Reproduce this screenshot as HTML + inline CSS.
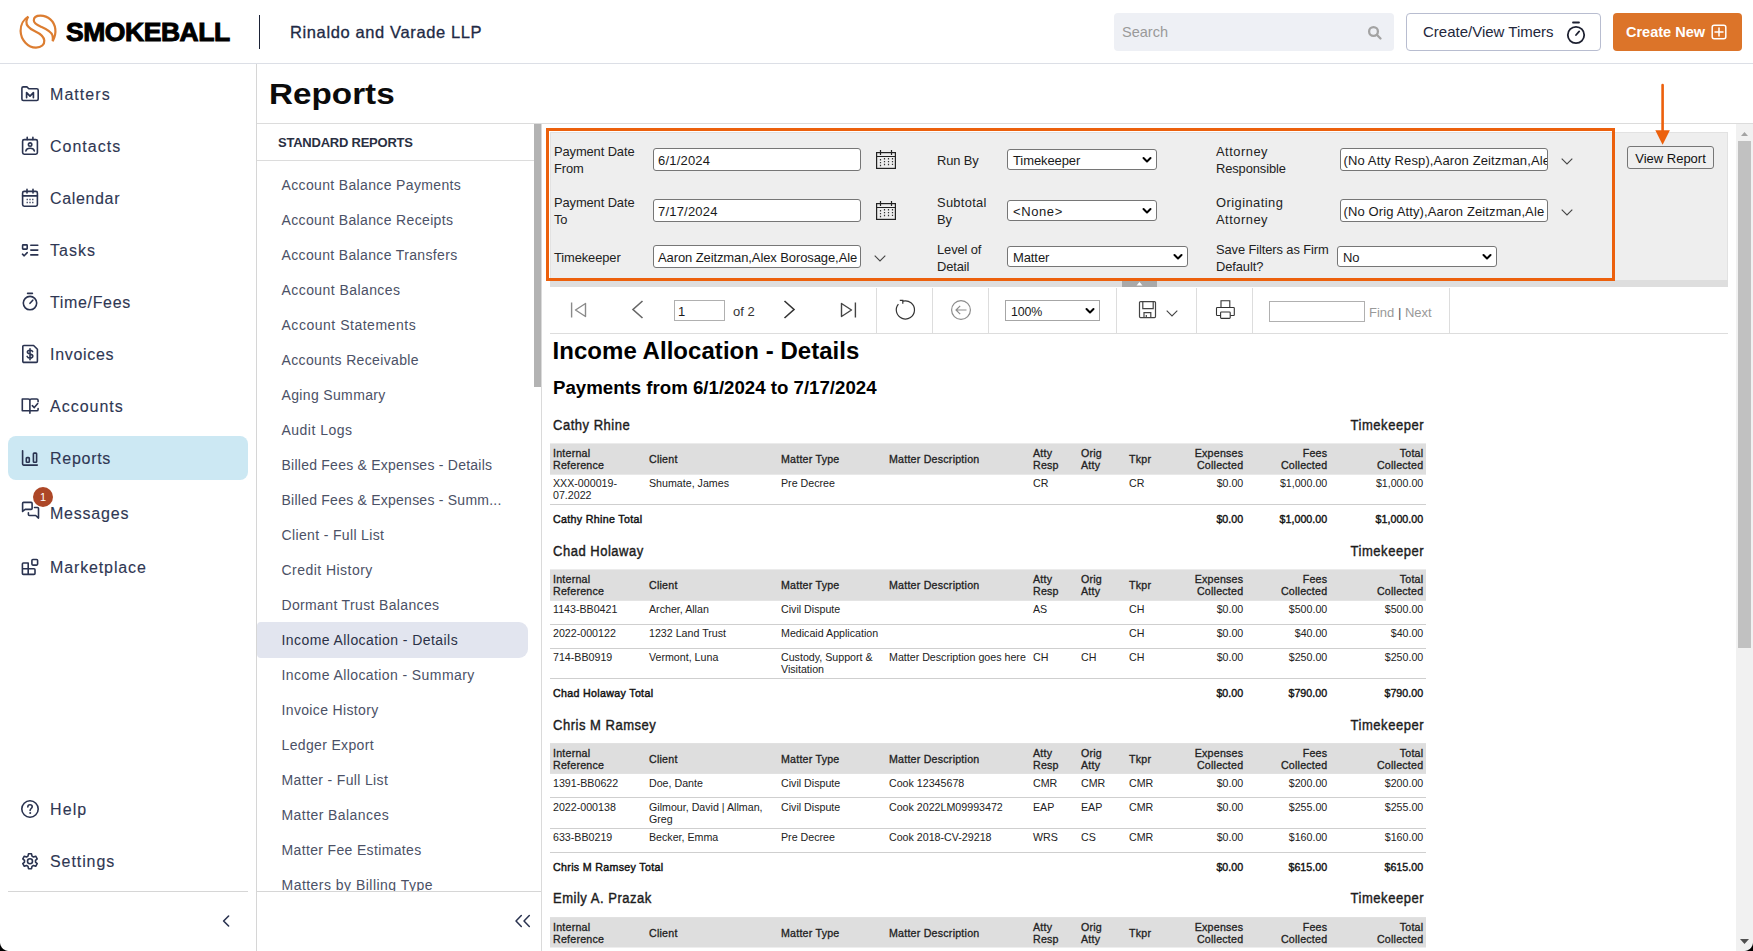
<!DOCTYPE html>
<html lang="en">
<head>
<meta charset="utf-8">
<title>Reports - Smokeball</title>
<style>
*{box-sizing:border-box;margin:0;padding:0}
html,body{width:1753px;height:951px;overflow:hidden;background:#fff}
body{font-family:"Liberation Sans",sans-serif;color:#1f2937;position:relative}
.abs{position:absolute}
svg{display:block}
/* header */
#hdr{z-index:5;position:absolute;left:0;top:0;width:1753px;height:64px;border-bottom:1px solid #dcdfe6;background:#fff}
#brand{position:absolute;left:66px;top:16px;font-weight:700;font-size:26.5px;line-height:32px;color:#000;letter-spacing:-0.45px;-webkit-text-stroke:1px #000;white-space:nowrap}
#hdiv{position:absolute;left:259px;top:15px;width:1.3px;height:34px;background:#1b2236}
#firm{position:absolute;left:290px;top:21px;font-size:16.5px;line-height:22px;color:#222a45;white-space:nowrap;-webkit-text-stroke:0.3px #222a45;letter-spacing:0.62px}
#search{position:absolute;left:1114px;top:13px;width:280px;height:38px;background:#eef0f5;border-radius:4px}
#search span{position:absolute;left:8px;top:10px;font-size:14.5px;line-height:18px;color:#9a9a9a}
#timers{position:absolute;left:1406px;top:13px;width:195px;height:38px;border:1px solid #b8bdd0;border-radius:4px;background:#fff}
#timers span{position:absolute;left:16px;top:9px;font-size:15px;line-height:18px;color:#23273b;white-space:nowrap}
#cnew{position:absolute;left:1613px;top:13px;width:129px;height:38px;border-radius:4px;background:#dc7429}
#cnew span{position:absolute;left:13px;top:10px;font-size:14.5px;line-height:18px;color:#fff;font-weight:700;white-space:nowrap}
/* sidebar */
#side{position:absolute;left:0;top:0;width:257px;height:951px;border-right:1px solid #d6d6d6;background:#fff}
.nav{position:absolute;left:50px;margin-top:1px;font-size:16px;line-height:22px;color:#2f3753;white-space:nowrap;-webkit-text-stroke:0.12px #2f3753;letter-spacing:0.65px}
.nico{position:absolute;left:20px;width:20px;height:20px}
.nico svg{width:20px;height:20px;fill:none;stroke:#2a3350;stroke-width:1.6;stroke-linecap:round;stroke-linejoin:round}
#active{position:absolute;left:8px;top:436px;width:240px;height:44px;border-radius:8px;background:#cce8f3}
#badge{position:absolute;left:33px;top:487px;width:20px;height:20px;border-radius:10px;background:#ad4727;color:#fff;font-size:11px;line-height:20px;text-align:center}
#sdiv{position:absolute;left:8px;top:891px;width:240px;height:1px;background:#d6d6d6}
#corner{position:absolute;left:0;top:942px;width:9px;height:9px;background:radial-gradient(circle at 100% 0,transparent 0,transparent 8.5px,#000 9.5px)}
/* main */
#title{position:absolute;left:269px;top:74px;font-size:28.6px;line-height:40px;font-weight:700;color:#0b0b0b;transform:scaleX(1.163);transform-origin:0 0;white-space:nowrap}
#tline{position:absolute;left:257px;top:123px;width:1496px;height:1px;background:#dcdcdc}
#lp{position:absolute;left:257px;top:124px;width:285px;height:827px;border-right:1px solid #dadada;overflow:hidden}
#lphead{position:absolute;left:21px;top:9.7px;font-size:13px;line-height:18px;font-weight:700;color:#2a2f42;letter-spacing:-0.23px;white-space:nowrap}
#lpline{position:absolute;left:0;top:36px;width:277px;height:1px;background:#dcdcdc}
#lplist{position:absolute;left:0;top:37px;width:277px;height:730px;overflow:hidden}
#lplist .li{position:absolute;left:24.5px;margin-top:-37px;font-size:14px;line-height:20px;color:#4b5166;white-space:nowrap;letter-spacing:0.35px}
#lplist .li.sel{color:#2b3146}
#lpsel{position:absolute;left:0;top:498px;width:271px;height:36px;border-radius:4px 9px 9px 4px;background:#e2e5ef}
#lpsb{position:absolute;left:277px;top:0;width:7px;height:263px;background:#b3b3b3}
#lpfoot{position:absolute;left:0;top:767px;width:284px;height:60px;border-top:1px solid #d6d6d6;background:#fff}
#rv{position:absolute;left:0;top:0;width:1753px;height:951px;font-family:"Liberation Sans",sans-serif}
#fp{position:absolute;left:550px;top:132px;width:1178px;height:148.5px;background:#eeeeee;border:1px solid #e2e2e2}
#fpband{position:absolute;left:550px;top:280px;width:1178px;height:7px;background:#dedede}
#fphandle{position:absolute;left:1122px;top:280px;width:35px;height:7px;background:#a9a9a9}
#obox{position:absolute;left:546.2px;top:127.8px;width:1068.4px;height:153px;border:3.6px solid #ec600c}
.lab{position:absolute;font-size:12.9px;line-height:17px;color:#222;white-space:nowrap;letter-spacing:-0.1px}
.inp,.sel2,.tinp{position:absolute;background:#fff;border:1px solid #767676;border-radius:3px;overflow:hidden}
.inp span,.sel2 span,.tinp span{position:absolute;left:4px;top:4px;font-size:13px;line-height:16px;color:#1a1a1a;white-space:nowrap;letter-spacing:-0.1px}
.inp span i{font-style:normal;letter-spacing:0.2px}
.inp span b{font-weight:400;letter-spacing:0.13px;margin-left:-1.5px}
.lab i{font-style:normal}
.sel2 span{top:3px;left:5px}
.sel2.sq{border-radius:0;border-color:#a6a6a6}
.sel2.sq span{left:5px;top:2.5px;font-size:12.4px}
.tinp{border-color:#b0b0b0;border-radius:0}
.tinp span{left:3px;top:3px}
#vbtn{position:absolute;left:1627px;top:146px;width:87px;height:23px;border:1px solid #767676;border-radius:3px;background:#efefef;font-size:13px;line-height:23px;text-align:center;color:#111}
#tbline{position:absolute;left:550px;top:333px;width:1178px;height:1px;background:#dddddd}
.tsep{position:absolute;top:288px;width:1px;height:45px;background:#dddddd}
.ttxt{position:absolute;font-size:13px;line-height:16px;white-space:nowrap}
#vsb{position:absolute;left:1736px;top:124px;width:17px;height:827px;background:#f1f1f1}
#vthumb{position:absolute;left:2px;top:17px;width:13px;height:507px;background:#c1c1c1}
#corner2{position:absolute;left:1744px;top:942px;width:9px;height:9px;background:radial-gradient(circle at 0 0,transparent 0,transparent 8.5px,#000 9.5px)}
#r1{position:absolute;left:552.5px;top:337px;font-size:24px;line-height:28px;font-weight:700;color:#000;white-space:nowrap;letter-spacing:0.04px}
#r2{position:absolute;left:553px;top:376px;font-size:18.67px;line-height:24px;font-weight:700;color:#000;white-space:nowrap}
.hbg{position:absolute;left:550px}
.th{position:absolute;font-size:10.67px;line-height:12px;color:#222;white-space:nowrap;-webkit-text-stroke:0.3px #222;letter-spacing:0.22px}
.td{position:absolute;font-size:10.67px;line-height:12px;color:#222;white-space:nowrap}
.tt{position:absolute;font-size:10.67px;line-height:12px;color:#111;white-space:nowrap;-webkit-text-stroke:0.42px #111;letter-spacing:0.32px}
.r{width:100px;text-align:right}
.tt.a{letter-spacing:0.05px;-webkit-text-stroke:0.38px #111}
.gh{position:absolute;font-size:14px;line-height:18px;color:#1c1c1c;white-space:nowrap;-webkit-text-stroke:0.4px #1c1c1c;letter-spacing:0.55px;transform:scaleX(.93);transform-origin:0 0}
.gh.r{width:200px;transform-origin:100% 0;margin-left:0.6px}
.rl{position:absolute;left:550px;width:876px;height:1px;background:#cfcfcf}
</style>
</head>
<body>
<div id="hdr">
  <svg class="abs" style="left:14px;top:8px" width="50" height="48" viewBox="14 8 50 48" fill="none" stroke="#dc7d31" stroke-width="2.2" stroke-linejoin="miter" stroke-miterlimit="4">
    <path d="M28.3 16.6C24 19 20.5 24.5 20.6 31C20.8 40 28 47.5 36 47.6C41.5 47.6 44.6 44.5 44.3 40.5C44 36 40 33.5 35 31.2C30 29 26 26 26.4 21.5C26.6 19.5 27.3 18 28.3 16.6Z"/>
    <path d="M52.7 41.2C55 37 55.8 33 55.3 29C54.3 21 48 15.8 40.5 15.7C36.5 15.7 33.8 17.5 33.8 20.5C33.8 23.5 37 25 41 26.8C46 29 51 31 52.5 35.5C53 37.5 53 39.5 52.7 41.2Z"/>
  </svg>
  <div id="brand">SMOKEBALL</div>
  <div id="hdiv"></div>
  <div id="firm">Rinaldo and Varade LLP</div>
  <div id="search"><span>Search</span>
    <svg class="abs" style="left:253px;top:12px" width="16" height="16" viewBox="0 0 16 16" fill="none" stroke="#a3a3a3" stroke-width="2.3"><circle cx="6.5" cy="6.5" r="4.4"/><path d="M9.8 9.8L13.5 13.5" stroke-linecap="round"/></svg>
  </div>
  <div id="timers"><span>Create/View Timers</span>
    <svg class="abs" style="left:157px;top:6px" width="24" height="26" viewBox="0 0 24 26" fill="none" stroke="#1d2030" stroke-width="1.8" stroke-linecap="round"><circle cx="12" cy="15" r="8.2"/><path d="M9 2.5h6M12 15l3.2-3.6"/></svg>
  </div>
  <div id="cnew"><span>Create New</span>
    <svg class="abs" style="left:97px;top:10px" width="18" height="18" viewBox="0 0 18 18" fill="none" stroke="#fff" stroke-width="1.5" stroke-linecap="round"><rect x="2.2" y="2.2" width="13.6" height="13.6" rx="2"/><path d="M9 5v8M5 9h8"/></svg>
  </div>
</div>

<div id="side">
  <div id="active"></div>
  <!--NAV-->
  <div class="nico" style="top:84px"><svg viewBox="0 0 20 20"><path d="M1.9 4.3a1.4 1.4 0 0 1 1.4-1.4h3.6l1.9 1.9h8a1.4 1.4 0 0 1 1.4 1.4v8.9a1.4 1.4 0 0 1-1.4 1.4H3.3a1.4 1.4 0 0 1-1.4-1.4z"/><path d="M6.6 13.6V8.6l3.4 3.6 3.4-3.6v5" stroke-width="1.7"/></svg></div><div class="nav" style="top:83px;letter-spacing:1.05px">Matters</div>
  <div class="nico" style="top:136px"><svg viewBox="0 0 20 20"><rect x="2.6" y="3.6" width="14.8" height="14.6" rx="1.6"/><path d="M7.2 1.4v2.2M12.9 1.4v2.2"/><circle cx="10.1" cy="8.6" r="1.7"/><path d="M5.9 14.9c.8-3.5 7.6-3.5 8.4 0"/></svg></div><div class="nav" style="top:135px;letter-spacing:1.0px">Contacts</div>
  <div class="nico" style="top:188px"><svg viewBox="0 0 20 20"><rect x="2.6" y="3.4" width="14.8" height="14.8" rx="1.6"/><path d="M7 1.4v3.6M13 1.4v3.6M2.6 7.9h14.8"/><path d="M6.6 11.4h1.2M9.4 11.4h1.2M12.2 11.4h1.2M6.6 14.4h1.2M9.4 14.4h1.2M12.2 14.4h1.2" stroke-width="1.5" stroke-linecap="butt"/></svg></div><div class="nav" style="top:187px;letter-spacing:0.65px">Calendar</div>
  <div class="nico" style="top:240px"><svg viewBox="0 0 20 20"><rect x="2.6" y="4.9" width="4.6" height="4.2" rx=".6"/><path d="M2.5 14.2l1.7 1.6 3-3.2M10.8 5.2h7M10.8 10.1h7M10.8 14.9h7"/></svg></div><div class="nav" style="top:239px;letter-spacing:1.05px">Tasks</div>
  <div class="nico" style="top:292px"><svg viewBox="0 0 20 20"><circle cx="10" cy="11.1" r="6.7"/><path d="M7.6 1.4h4.8M10 11.3l2.8-3.1"/></svg></div><div class="nav" style="top:291px;letter-spacing:0.65px">Time/Fees</div>
  <div class="nico" style="top:344px"><svg viewBox="0 0 20 20"><path d="M3.9 1.5h9.7l3.8 3.8v12a1.1 1.1 0 0 1-1.1 1.1H3.9a1.1 1.1 0 0 1-1.1-1.1V2.6a1.1 1.1 0 0 1 1.1-1.1z"/><path d="M12.6 7.6c-.3-.9-1.3-1.4-2.6-1.4-1.5 0-2.6.7-2.6 1.9 0 2.8 5.4 1.2 5.4 4 0 1.2-1.2 2-2.8 2-1.5 0-2.6-.6-2.9-1.7M10 4.7v11"/></svg></div><div class="nav" style="top:343px;letter-spacing:0.7px">Invoices</div>
  <div class="nico" style="top:396px"><svg viewBox="0 0 20 20"><path d="M9.9 14.8H2.3V3h6a1.6 1.6 0 0 1 1.6 1.6zM9.9 4.6A1.6 1.6 0 0 1 11.5 3h5.2a1.4 1.4 0 0 1 1.4 1.4v1.4M9.9 14.8v2.5M9.9 14.8h6.8a1.4 1.4 0 0 0 1.4-1.4v-.8"/><path d="M12.3 9.7l2 1.9 3.4-4"/></svg></div><div class="nav" style="top:395px;letter-spacing:1.0px">Accounts</div>
  <div class="nico" style="top:448px"><svg viewBox="0 0 20 20"><path d="M2.6 2.8v13.3a1 1 0 0 0 1 1h13.7"/><rect x="6.3" y="9.6" width="3" height="4.6" rx=".7"/><rect x="13.4" y="5.1" width="3.2" height="9.1" rx=".7"/></svg></div><div class="nav" style="top:447px;letter-spacing:0.72px">Reports</div>
  <div class="nico" style="top:500px"><svg viewBox="0 0 20 20"><path d="M2.6 11.4V3.4a1 1 0 0 1 1-1h7.5a1 1 0 0 1 1 1v5a1 1 0 0 1-1 1H5.2z"/><path d="M14.5 7.5h3a1 1 0 0 1 1 1v9.6l-2.8-2.6H9.4a1 1 0 0 1-1-1v-1.8"/></svg></div><div class="nav" style="top:502px;letter-spacing:0.78px">Messages</div>
  <div class="nico" style="top:557px"><svg viewBox="0 0 20 20"><path d="M2.4 7a1 1 0 0 1 1-1h4.8v11.4H3.4a1 1 0 0 1-1-1zM2.4 11.8h11.6a1 1 0 0 1 1 1v3.6a1 1 0 0 1-1 1H8.2"/><rect x="11.9" y="2.5" width="5.7" height="5.6" rx="1"/></svg></div><div class="nav" style="top:556px;letter-spacing:0.87px">Marketplace</div>
  <div class="nico" style="top:799px"><svg viewBox="0 0 20 20"><circle cx="10" cy="10" r="8.2"/><path d="M7.8 7.9c0-1.3 1-2.1 2.2-2.1 1.3 0 2.2.9 2.2 2 0 1.7-2.1 1.7-2.1 3.6"/><circle cx="10.1" cy="14" r=".5" fill="#2a3350" stroke-width="1"/></svg></div><div class="nav" style="top:798px;letter-spacing:1.1px">Help</div>
  <div class="nico" style="top:851.7px"><svg viewBox="0 0 20 20"><path d="M8.5 1.8h3l.5 2.3 1.5.9 2.2-.8 1.5 2.6-1.7 1.6v1.7l1.7 1.6-1.5 2.6-2.2-.8-1.5.9-.5 2.3h-3l-.5-2.3-1.5-.9-2.2.8-1.5-2.6 1.7-1.6V8.4L2.8 6.8l1.5-2.6 2.2.8 1.5-.9z"/><circle cx="10" cy="9.25" r="2.5"/></svg></div><div class="nav" style="top:850px;letter-spacing:0.92px">Settings</div>
  <div id="badge">1</div>
  <div id="sdiv"></div>
  <svg class="abs" style="left:219px;top:913px" width="14" height="16" viewBox="0 0 14 16" fill="none" stroke="#2a3350" stroke-width="1.6" stroke-linecap="round" stroke-linejoin="round"><path d="M9.6 3L4.6 8l5 5"/></svg>
  <div id="corner"></div>
  <!--/NAV-->
</div>

<!--MAIN-->
<div id="title">Reports</div>
<div id="tline"></div>
<div id="lp">
  <div id="lphead">STANDARD REPORTS</div>
  <div id="lpline"></div>
  <div id="lpsel"></div>
  <div id="lplist">
    <div class="li" style="top:51px">Account Balance Payments</div>
    <div class="li" style="top:86px">Account Balance Receipts</div>
    <div class="li" style="top:121px">Account Balance Transfers</div>
    <div class="li" style="top:156px;letter-spacing:0.43px">Account Balances</div>
    <div class="li" style="top:191px;letter-spacing:0.52px">Account Statements</div>
    <div class="li" style="top:226px">Accounts Receivable</div>
    <div class="li" style="top:261px">Aging Summary</div>
    <div class="li" style="top:296px;letter-spacing:0.48px">Audit Logs</div>
    <div class="li" style="top:331px;letter-spacing:0.24px">Billed Fees &amp; Expenses - Details</div>
    <div class="li" style="top:366px;letter-spacing:0.24px">Billed Fees &amp; Expenses - Summ...</div>
    <div class="li" style="top:401px">Client - Full List</div>
    <div class="li" style="top:436px;letter-spacing:0.46px">Credit History</div>
    <div class="li" style="top:471px">Dormant Trust Balances</div>
    <div class="li sel" style="top:506px;letter-spacing:0.43px">Income Allocation - Details</div>
    <div class="li" style="top:541px;letter-spacing:0.41px">Income Allocation - Summary</div>
    <div class="li" style="top:576px">Invoice History</div>
    <div class="li" style="top:611px">Ledger Export</div>
    <div class="li" style="top:646px">Matter - Full List</div>
    <div class="li" style="top:681px;letter-spacing:0.43px">Matter Balances</div>
    <div class="li" style="top:716px">Matter Fee Estimates</div>
    <div class="li" style="top:751px;letter-spacing:0.47px">Matters by Billing Type</div>
  </div>
  <div id="lpsb"></div>
  <div id="lpfoot"><svg class="abs" style="left:257px;top:21px" width="18" height="16" viewBox="0 0 18 16" fill="none" stroke="#2a3350" stroke-width="1.5" stroke-linecap="round" stroke-linejoin="round"><path d="M7.3 2.5L2 8l5.3 5.5M15.3 2.5L10 8l5.3 5.5"/></svg></div>
</div>
<div id="rv">
  <div id="fp"></div><div id="fpband"></div><div id="fphandle"><svg width="35" height="7" viewBox="0 0 35 7"><path d="M14.5 5.5l3-3.5 3 3.5z" fill="#fff"/></svg></div>
  <div id="obox"></div>
  <div class="lab" style="left:554px;top:143.2px">Payment Date<br>From</div>
  <div class="lab" style="left:554px;top:194.1px">Payment Date<br>To</div>
  <div class="lab" style="left:554px;top:248.5px">Timekeeper</div>
  <div class="lab" style="left:937px;top:151.5px">Run By</div>
  <div class="lab" style="left:937px;top:194.1px"><i style="letter-spacing:.3px">Subtotal</i><br>By</div>
  <div class="lab" style="left:937px;top:240.9px">Level of<br>Detail</div>
  <div class="lab" style="left:1216px;top:143.3px"><i style="letter-spacing:.5px">Attorney</i><br>Responsible</div>
  <div class="lab" style="left:1216px;top:193.9px"><i style="letter-spacing:.45px">Originating</i><br><i style="letter-spacing:.5px">Attorney</i></div>
  <div class="lab" style="left:1216px;top:240.8px">Save Filters as Firm<br>Default?</div>
  <div class="inp" style="left:653px;top:148px;width:208px;height:23px"><span><i>6/1/2024</i></span></div>
  <div class="inp" style="left:653px;top:199px;width:208px;height:23px"><span><i>7/17/2024</i></span></div>
  <div class="inp" style="left:653px;top:245px;width:208px;height:23px"><span>Aaron Zeitzman,Alex Borosage,Ale</span></div>
  <div class="inp" style="left:1340px;top:148px;width:208px;height:23px"><span><b>(No Atty Resp),Aaron Zeitzman,Ale</b></span></div>
  <div class="inp" style="left:1340px;top:199px;width:208px;height:23px"><span><b>(No Orig Atty),Aaron Zeitzman,Ale</b></span></div>
  <div class="sel2" style="left:1007px;top:149px;width:150px;height:21px"><span>Timekeeper</span><svg class="abs" style="right:4px;top:5.5px" width="10" height="8" viewBox="0 0 10 8" fill="none" stroke="#000" stroke-width="2" stroke-linecap="round" stroke-linejoin="round"><path d="M1.5 2l3.5 3.5L8.5 2"/></svg></div>
  <div class="sel2" style="left:1007px;top:200px;width:150px;height:21px"><span><i style="font-style:normal;letter-spacing:.6px">&lt;None&gt;</i></span><svg class="abs" style="right:4px;top:5.5px" width="10" height="8" viewBox="0 0 10 8" fill="none" stroke="#000" stroke-width="2" stroke-linecap="round" stroke-linejoin="round"><path d="M1.5 2l3.5 3.5L8.5 2"/></svg></div>
  <div class="sel2" style="left:1007px;top:246px;width:181px;height:21px"><span>Matter</span><svg class="abs" style="right:4px;top:5.5px" width="10" height="8" viewBox="0 0 10 8" fill="none" stroke="#000" stroke-width="2" stroke-linecap="round" stroke-linejoin="round"><path d="M1.5 2l3.5 3.5L8.5 2"/></svg></div>
  <div class="sel2" style="left:1337px;top:246px;width:160px;height:21px"><span>No</span><svg class="abs" style="right:4px;top:5.5px" width="10" height="8" viewBox="0 0 10 8" fill="none" stroke="#000" stroke-width="2" stroke-linecap="round" stroke-linejoin="round"><path d="M1.5 2l3.5 3.5L8.5 2"/></svg></div>
  <svg class="abs" style="left:876px;top:150px" width="21" height="19" viewBox="0 0 21 19" fill="none" stroke="#222" stroke-width="1.2"><rect x=".6" y="2.6" width="18.8" height="15.8"/><path d="M.5 6.5h19M4.5 0v5M15.5 0v5"/><path d="M4.5 9v7.5M8.5 8v8.5M12.5 8v8.5M16.5 8v7" stroke-dasharray="1.4 1.5" stroke="#333"/></svg>
  <svg class="abs" style="left:876px;top:201px" width="21" height="19" viewBox="0 0 21 19" fill="none" stroke="#222" stroke-width="1.2"><rect x=".6" y="2.6" width="18.8" height="15.8"/><path d="M.5 6.5h19M4.5 0v5M15.5 0v5"/><path d="M4.5 9v7.5M8.5 8v8.5M12.5 8v8.5M16.5 8v7" stroke-dasharray="1.4 1.5" stroke="#333"/></svg>
  <svg class="abs" style="left:874px;top:255px" width="12" height="7" viewBox="0 0 12 7" fill="none" stroke="#444" stroke-width="1.1"><path d="M.7.7l5.3 5.2L11.3.7"/></svg>
  <svg class="abs" style="left:1561px;top:157.5px" width="12" height="7" viewBox="0 0 12 7" fill="none" stroke="#444" stroke-width="1.1"><path d="M.7.7l5.3 5.2L11.3.7"/></svg>
  <svg class="abs" style="left:1561px;top:208.5px" width="12" height="7" viewBox="0 0 12 7" fill="none" stroke="#444" stroke-width="1.1"><path d="M.7.7l5.3 5.2L11.3.7"/></svg>
  <div id="vbtn">View Report</div>
  <svg class="abs" style="left:1652px;top:82px" width="22" height="64" viewBox="0 0 22 64"><path d="M10.6 3v48" stroke="#ec600c" stroke-width="2.6" stroke-linecap="round" fill="none"/><path d="M3.3 48.2h14.6l-7.3 14.6z" fill="#ec600c"/></svg>
  <div id="tbline"></div>
  <div class="tsep" style="left:876px"></div>
  <div class="tsep" style="left:932px"></div>
  <div class="tsep" style="left:988px"></div>
  <div class="tsep" style="left:1116px"></div>
  <div class="tsep" style="left:1196px"></div>
  <div class="tsep" style="left:1252px"></div>
  <div class="tsep" style="left:1449px"></div>
  <svg class="abs" style="left:570px;top:301px" width="17" height="18" viewBox="0 0 17 18" fill="none" stroke="#8a8a8a" stroke-width="1.4"><path d="M1.6 1.5v15M15.5 2.5v13L5.5 9z" stroke-linejoin="round"/></svg>
  <svg class="abs" style="left:631px;top:300px" width="13" height="19" viewBox="0 0 13 19" fill="none" stroke="#666" stroke-width="1.6"><path d="M11.5 1L2 9.5 11.5 18"/></svg>
  <div class="tinp" style="left:674px;top:300px;width:51px;height:21px"><span>1</span></div>
  <div class="ttxt" style="left:733px;top:304px;color:#333">of 2</div>
  <svg class="abs" style="left:783px;top:300px" width="13" height="19" viewBox="0 0 13 19" fill="none" stroke="#333" stroke-width="1.6"><path d="M1.5 1L11 9.5 1.5 18"/></svg>
  <svg class="abs" style="left:840px;top:301px" width="17" height="18" viewBox="0 0 17 18" fill="none" stroke="#444" stroke-width="1.4"><path d="M15.4 1.5v15M1.5 2.5v13L11.5 9z" stroke-linejoin="round"/></svg>
  <svg class="abs" style="left:894px;top:298px" width="22" height="23" viewBox="0 0 22 23" fill="none" stroke="#333" stroke-width="1.2"><path d="M8.8 3.2A9.1 9.1 0 1 1 4.4 6.1"/><path d="M5.8 2.3h3v3.4"/></svg>
  <svg class="abs" style="left:950px;top:299px" width="22" height="22" viewBox="0 0 22 22" fill="none" stroke="#8c8c8c" stroke-width="1.2"><circle cx="11" cy="11" r="9.4"/><path d="M16.5 11H6M10.2 6.8L6 11l4.2 4.2"/></svg>
  <div class="sel2 sq" style="left:1005px;top:300px;width:95px;height:21px"><span>100%</span><svg class="abs" style="right:4px;top:5.5px" width="10" height="8" viewBox="0 0 10 8" fill="none" stroke="#000" stroke-width="2" stroke-linecap="round" stroke-linejoin="round"><path d="M1.5 2l3.5 3.5L8.5 2"/></svg></div>
  <svg class="abs" style="left:1138px;top:300px" width="19" height="19" viewBox="0 0 19 19" fill="none" stroke="#444" stroke-width="1.2"><path d="M2.5 1.6h14a1 1 0 0 1 1 1v14a1 1 0 0 1-1 1h-14a1 1 0 0 1-1-1v-14a1 1 0 0 1 1-1z"/><path d="M4.8 1.6v7h10.4v-7M6 17.6v-5h6.8v5M8.3 17.6v-2.5"/></svg>
  <svg class="abs" style="left:1166px;top:310px" width="12" height="7" viewBox="0 0 12 7" fill="none" stroke="#444" stroke-width="1.1"><path d="M.7.7l5.3 5.2L11.3.7"/></svg>
  <svg class="abs" style="left:1215px;top:299px" width="21" height="21" viewBox="0 0 21 21" fill="none" stroke="#333" stroke-width="1.1"><path d="M6 8.5V1.8h8.8v6.7M5.5 16.5H2.3a.8.8 0 0 1-.8-.8V9.3a.8.8 0 0 1 .8-.8h16.2a.8.8 0 0 1 .8.8v6.4a.8.8 0 0 1-.8.8h-3.2"/><rect x="5.6" y="13" width="9.6" height="6.4" rx=".8"/></svg>
  <div class="tinp" style="left:1269px;top:301px;width:96px;height:21px"></div>
  <div class="ttxt" style="left:1369px;top:305px;color:#999">Find <span style="color:#555">|</span> Next</div>
  <div id="vsb"><div id="vthumb"></div><svg class="abs" style="left:5px;top:7.5px" width="7" height="4" viewBox="0 0 7 4"><path d="M0 4l3.5-4 3.5 4z" fill="#a3a3a3"/></svg><svg class="abs" style="left:4px;top:815px" width="9" height="5" viewBox="0 0 9 5"><path d="M0 0l4.5 5 4.5-5z" fill="#505050"/></svg></div>
  <div id="corner2"></div>
  <div id="r1">Income Allocation - Details</div>
  <div id="r2">Payments from 6/1/2024 to 7/17/2024</div>
  <div class="gh" style="left:553px;top:416px">Cathy Rhine</div>
  <div class="gh r" style="left:1223.3px;top:416px">Timekeeper</div>
  <svg class="hbg" style="top:443px" width="876" height="33" viewBox="0 0 876 33"><rect x="0" y="0.4" width="876" height="31.3" fill="#dedede"/></svg>
  <div class="th" style="left:553px;top:446.9px">Internal<br>Reference</div>
  <div class="th" style="left:1033px;top:446.9px">Atty<br>Resp</div>
  <div class="th" style="left:1081px;top:446.9px">Orig<br>Atty</div>
  <div class="th" style="left:649px;top:452.9px">Client</div>
  <div class="th" style="left:781px;top:452.9px">Matter Type</div>
  <div class="th" style="left:889px;top:452.9px">Matter Description</div>
  <div class="th" style="left:1129px;top:452.9px">Tkpr</div>
  <div class="th r" style="left:1143.3px;top:446.9px">Expenses<br>Collected</div>
  <div class="th r" style="left:1227.3px;top:446.9px">Fees<br>Collected</div>
  <div class="th r" style="left:1323.3px;top:446.9px">Total<br>Collected</div>
  <div class="td" style="left:553px;top:476.9px">XXX-000019-<br>07.2022</div>
  <div class="td" style="left:649px;top:476.9px">Shumate, James</div>
  <div class="td" style="left:781px;top:476.9px">Pre Decree</div>
  <div class="td" style="left:1033px;top:476.9px">CR</div>
  <div class="td" style="left:1129px;top:476.9px">CR</div>
  <div class="td r" style="left:1143.3px;top:476.9px">$0.00</div>
  <div class="td r" style="left:1227.3px;top:476.9px">$1,000.00</div>
  <div class="td r" style="left:1323.3px;top:476.9px">$1,000.00</div>
  <div class="rl" style="top:503.6px"></div>
  <div class="tt" style="left:553px;top:512.6px">Cathy Rhine Total</div>
  <div class="tt r a" style="left:1143.3px;top:512.6px">$0.00</div>
  <div class="tt r a" style="left:1227.3px;top:512.6px">$1,000.00</div>
  <div class="tt r a" style="left:1323.3px;top:512.6px">$1,000.00</div>
  <div class="gh" style="left:553px;top:542px">Chad Holaway</div>
  <div class="gh r" style="left:1223.3px;top:542px">Timekeeper</div>
  <svg class="hbg" style="top:569px" width="876" height="33" viewBox="0 0 876 33"><rect x="0" y="0.4" width="876" height="31.4" fill="#dedede"/></svg>
  <div class="th" style="left:553px;top:572.9px">Internal<br>Reference</div>
  <div class="th" style="left:1033px;top:572.9px">Atty<br>Resp</div>
  <div class="th" style="left:1081px;top:572.9px">Orig<br>Atty</div>
  <div class="th" style="left:649px;top:578.9px">Client</div>
  <div class="th" style="left:781px;top:578.9px">Matter Type</div>
  <div class="th" style="left:889px;top:578.9px">Matter Description</div>
  <div class="th" style="left:1129px;top:578.9px">Tkpr</div>
  <div class="th r" style="left:1143.3px;top:572.9px">Expenses<br>Collected</div>
  <div class="th r" style="left:1227.3px;top:572.9px">Fees<br>Collected</div>
  <div class="th r" style="left:1323.3px;top:572.9px">Total<br>Collected</div>
  <div class="td" style="left:553px;top:602.9px">1143-BB0421</div>
  <div class="td" style="left:649px;top:602.9px">Archer, Allan</div>
  <div class="td" style="left:781px;top:602.9px">Civil Dispute</div>
  <div class="td" style="left:1033px;top:602.9px">AS</div>
  <div class="td" style="left:1129px;top:602.9px">CH</div>
  <div class="td r" style="left:1143.3px;top:602.9px">$0.00</div>
  <div class="td r" style="left:1227.3px;top:602.9px">$500.00</div>
  <div class="td r" style="left:1323.3px;top:602.9px">$500.00</div>
  <div class="rl" style="top:623.8px"></div>
  <div class="td" style="left:553px;top:626.8px">2022-000122</div>
  <div class="td" style="left:649px;top:626.8px">1232 Land Trust</div>
  <div class="td" style="left:781px;top:626.8px">Medicaid Application</div>
  <div class="td" style="left:1129px;top:626.8px">CH</div>
  <div class="td r" style="left:1143.3px;top:626.8px">$0.00</div>
  <div class="td r" style="left:1227.3px;top:626.8px">$40.00</div>
  <div class="td r" style="left:1323.3px;top:626.8px">$40.00</div>
  <div class="rl" style="top:647.7px"></div>
  <div class="td" style="left:553px;top:650.7px">714-BB0919</div>
  <div class="td" style="left:649px;top:650.7px">Vermont, Luna</div>
  <div class="td" style="left:781px;top:650.7px">Custody, Support &amp;<br>Visitation</div>
  <div class="td" style="left:889px;top:650.7px">Matter Description goes here</div>
  <div class="td" style="left:1033px;top:650.7px">CH</div>
  <div class="td" style="left:1081px;top:650.7px">CH</div>
  <div class="td" style="left:1129px;top:650.7px">CH</div>
  <div class="td r" style="left:1143.3px;top:650.7px">$0.00</div>
  <div class="td r" style="left:1227.3px;top:650.7px">$250.00</div>
  <div class="td r" style="left:1323.3px;top:650.7px">$250.00</div>
  <div class="rl" style="top:677.6px"></div>
  <div class="tt" style="left:553px;top:686.6px">Chad Holaway Total</div>
  <div class="tt r a" style="left:1143.3px;top:686.6px">$0.00</div>
  <div class="tt r a" style="left:1227.3px;top:686.6px">$790.00</div>
  <div class="tt r a" style="left:1323.3px;top:686.6px">$790.00</div>
  <div class="gh" style="left:553px;top:716px">Chris M Ramsey</div>
  <div class="gh r" style="left:1223.3px;top:716px">Timekeeper</div>
  <svg class="hbg" style="top:743px" width="876" height="33" viewBox="0 0 876 33"><rect x="0" y="0.1" width="876" height="30.8" fill="#dedede"/></svg>
  <div class="th" style="left:553px;top:746.6px">Internal<br>Reference</div>
  <div class="th" style="left:1033px;top:746.6px">Atty<br>Resp</div>
  <div class="th" style="left:1081px;top:746.6px">Orig<br>Atty</div>
  <div class="th" style="left:649px;top:752.6px">Client</div>
  <div class="th" style="left:781px;top:752.6px">Matter Type</div>
  <div class="th" style="left:889px;top:752.6px">Matter Description</div>
  <div class="th" style="left:1129px;top:752.6px">Tkpr</div>
  <div class="th r" style="left:1143.3px;top:746.6px">Expenses<br>Collected</div>
  <div class="th r" style="left:1227.3px;top:746.6px">Fees<br>Collected</div>
  <div class="th r" style="left:1323.3px;top:746.6px">Total<br>Collected</div>
  <div class="td" style="left:553px;top:776.6px">1391-BB0622</div>
  <div class="td" style="left:649px;top:776.6px">Doe, Dante</div>
  <div class="td" style="left:781px;top:776.6px">Civil Dispute</div>
  <div class="td" style="left:889px;top:776.6px">Cook 12345678</div>
  <div class="td" style="left:1033px;top:776.6px">CMR</div>
  <div class="td" style="left:1081px;top:776.6px">CMR</div>
  <div class="td" style="left:1129px;top:776.6px">CMR</div>
  <div class="td r" style="left:1143.3px;top:776.6px">$0.00</div>
  <div class="td r" style="left:1227.3px;top:776.6px">$200.00</div>
  <div class="td r" style="left:1323.3px;top:776.6px">$200.00</div>
  <div class="rl" style="top:797.2px"></div>
  <div class="td" style="left:553px;top:801.2px">2022-000138</div>
  <div class="td" style="left:649px;top:801.2px">Gilmour, David | Allman,<br>Greg</div>
  <div class="td" style="left:781px;top:801.2px">Civil Dispute</div>
  <div class="td" style="left:889px;top:801.2px">Cook 2022LM09993472</div>
  <div class="td" style="left:1033px;top:801.2px">EAP</div>
  <div class="td" style="left:1081px;top:801.2px">EAP</div>
  <div class="td" style="left:1129px;top:801.2px">CMR</div>
  <div class="td r" style="left:1143.3px;top:801.2px">$0.00</div>
  <div class="td r" style="left:1227.3px;top:801.2px">$255.00</div>
  <div class="td r" style="left:1323.3px;top:801.2px">$255.00</div>
  <div class="rl" style="top:828.4px"></div>
  <div class="td" style="left:553px;top:831.4px">633-BB0219</div>
  <div class="td" style="left:649px;top:831.4px">Becker, Emma</div>
  <div class="td" style="left:781px;top:831.4px">Pre Decree</div>
  <div class="td" style="left:889px;top:831.4px">Cook 2018-CV-29218</div>
  <div class="td" style="left:1033px;top:831.4px">WRS</div>
  <div class="td" style="left:1081px;top:831.4px">CS</div>
  <div class="td" style="left:1129px;top:831.4px">CMR</div>
  <div class="td r" style="left:1143.3px;top:831.4px">$0.00</div>
  <div class="td r" style="left:1227.3px;top:831.4px">$160.00</div>
  <div class="td r" style="left:1323.3px;top:831.4px">$160.00</div>
  <div class="rl" style="top:852.3px"></div>
  <div class="tt" style="left:553px;top:861.3px">Chris M Ramsey Total</div>
  <div class="tt r a" style="left:1143.3px;top:861.3px">$0.00</div>
  <div class="tt r a" style="left:1227.3px;top:861.3px">$615.00</div>
  <div class="tt r a" style="left:1323.3px;top:861.3px">$615.00</div>
  <div class="gh" style="left:553px;top:889px">Emily A. Prazak</div>
  <div class="gh r" style="left:1223.3px;top:889px">Timekeeper</div>
  <svg class="hbg" style="top:917px" width="876" height="33" viewBox="0 0 876 33"><rect x="0" y="0.1" width="876" height="30.4" fill="#dedede"/></svg>
  <div class="th" style="left:553px;top:920.6px">Internal<br>Reference</div>
  <div class="th" style="left:1033px;top:920.6px">Atty<br>Resp</div>
  <div class="th" style="left:1081px;top:920.6px">Orig<br>Atty</div>
  <div class="th" style="left:649px;top:926.6px">Client</div>
  <div class="th" style="left:781px;top:926.6px">Matter Type</div>
  <div class="th" style="left:889px;top:926.6px">Matter Description</div>
  <div class="th" style="left:1129px;top:926.6px">Tkpr</div>
  <div class="th r" style="left:1143.3px;top:920.6px">Expenses<br>Collected</div>
  <div class="th r" style="left:1227.3px;top:920.6px">Fees<br>Collected</div>
  <div class="th r" style="left:1323.3px;top:920.6px">Total<br>Collected</div>
</div>
<!--/MAIN-->
</body>
</html>
